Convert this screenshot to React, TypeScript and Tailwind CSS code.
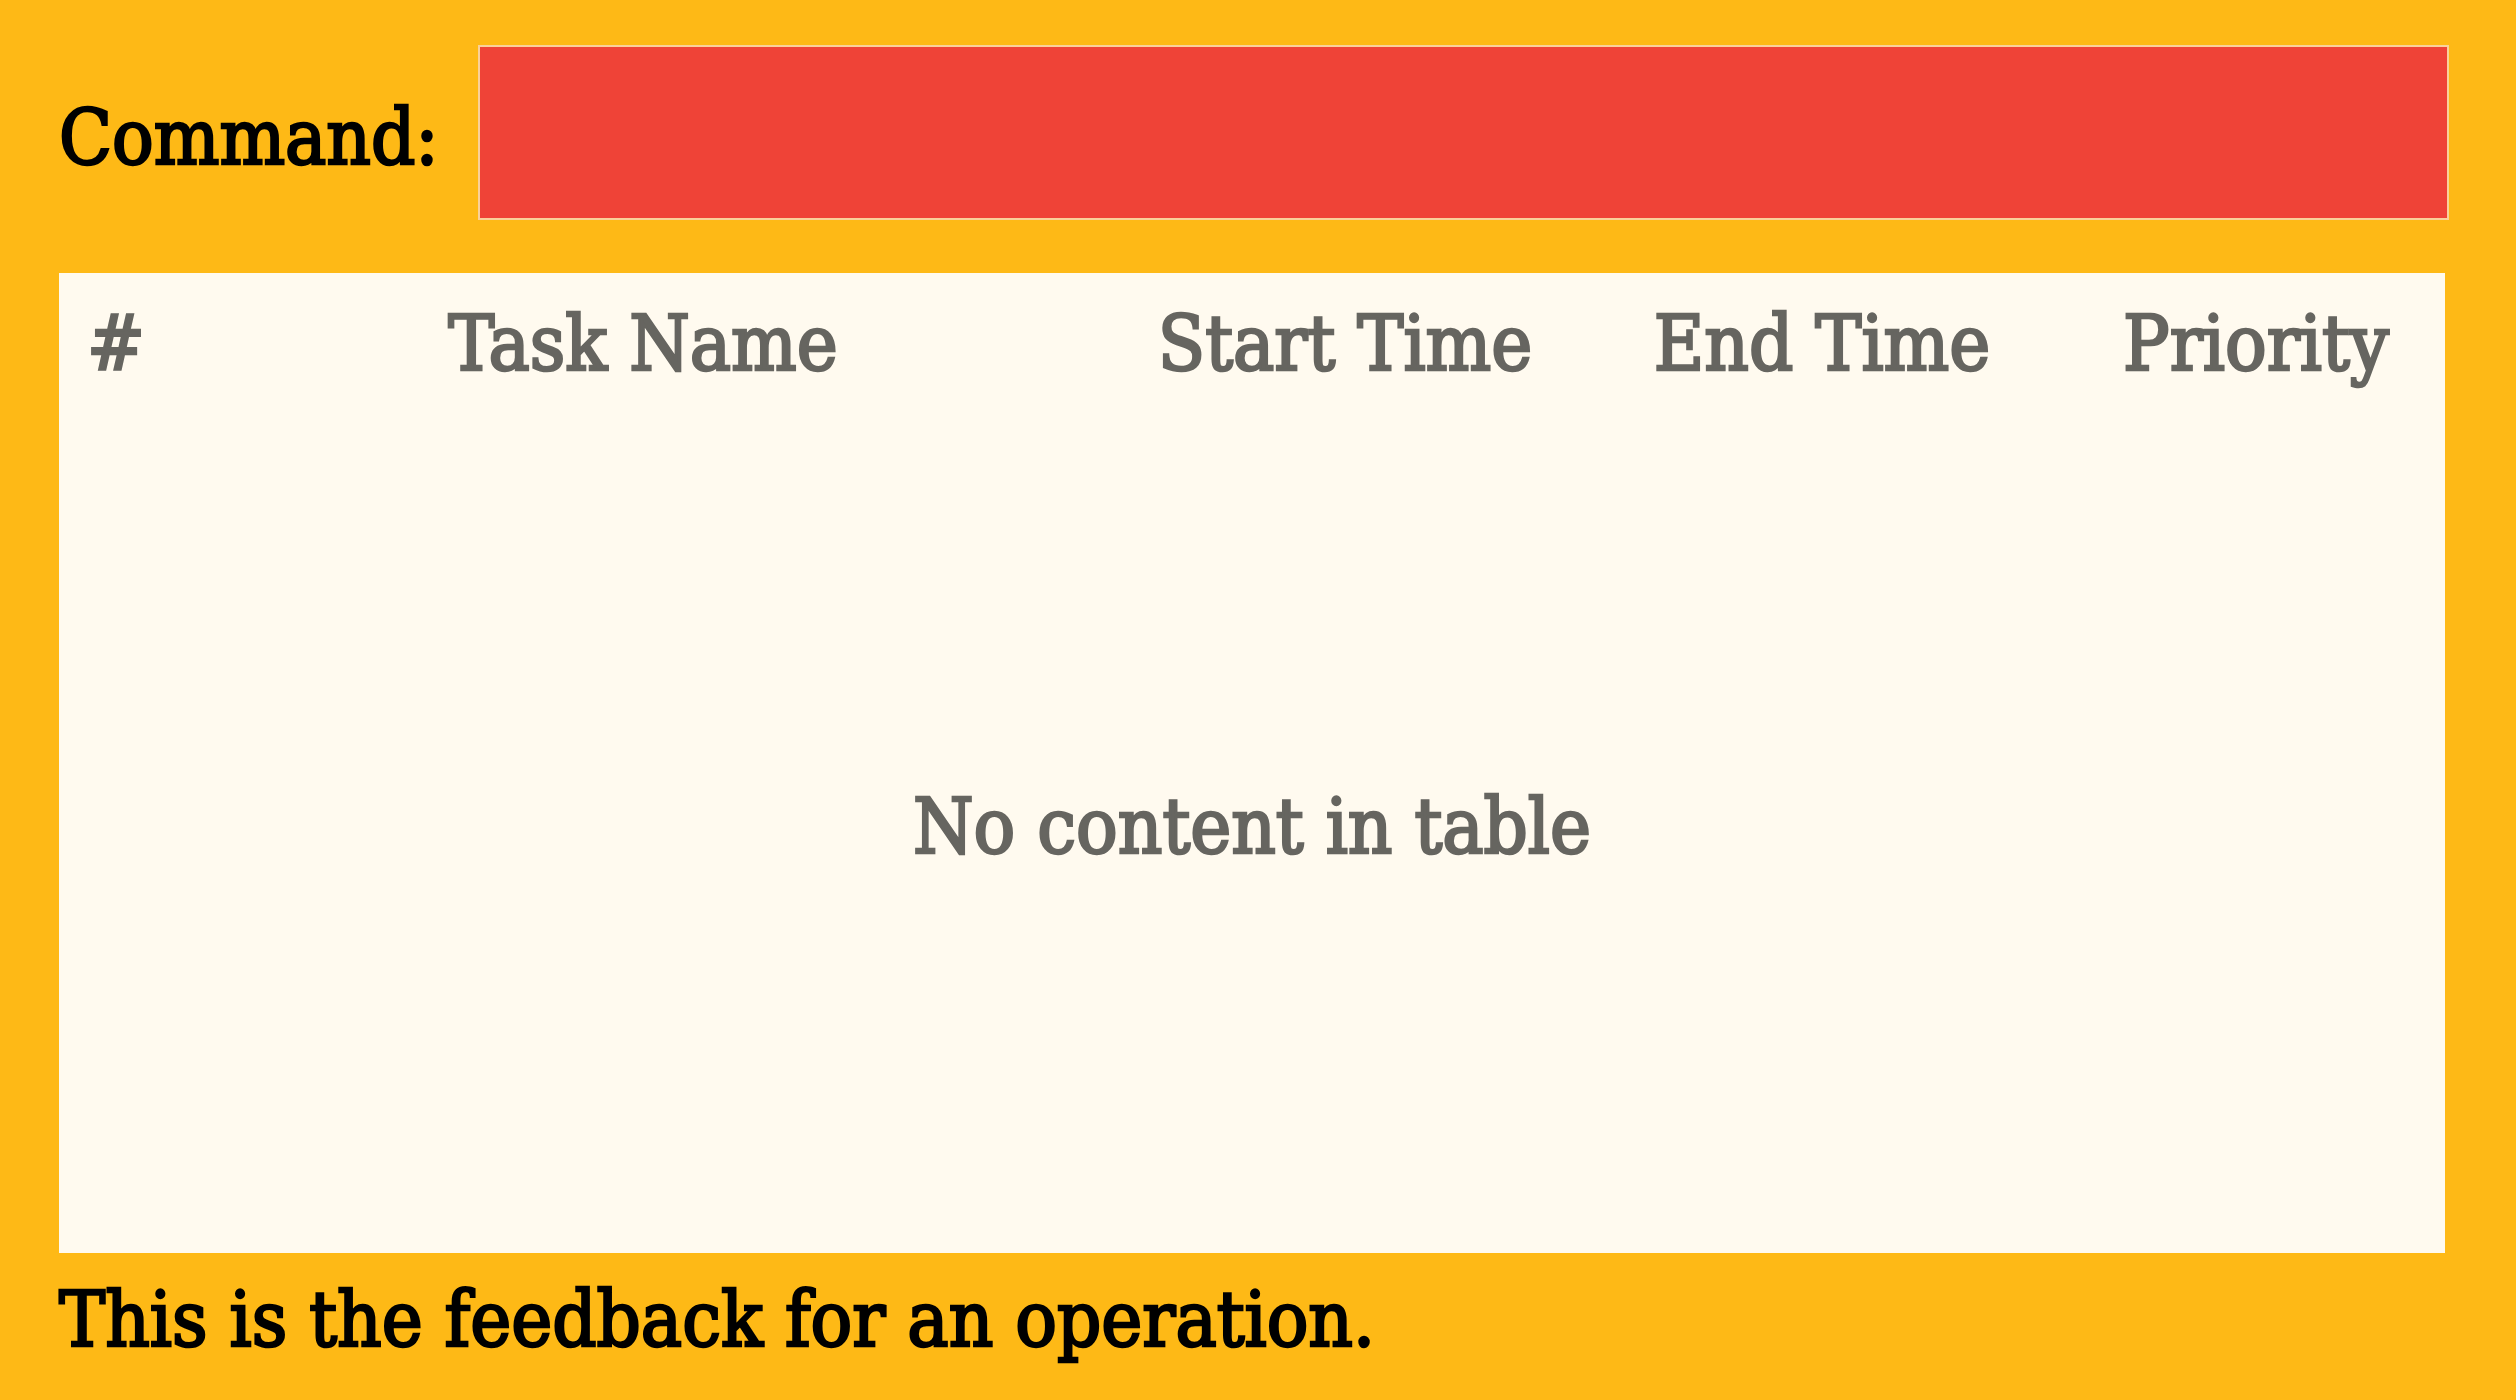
import React from "react";

const font = { fontFamily: '"DejaVu Serif Condensed", "DejaVu Serif", serif' };

export default function App() {
  return (
    <div
      className="w-[2516px] h-[1400px] bg-[#FEB916] pl-[59px] pr-[67px] pt-[45px] flex flex-col overflow-hidden [-webkit-text-stroke:2.5px_currentColor]"
      style={font}
    >
      <div className="flex items-center h-[175px]">
        <div className="w-[419px] shrink-0 text-[77px] leading-none text-black pt-[10px]">Command:</div>
        <div className="flex-1 h-full bg-[#EF4337] border-2 border-[#FAD19A]" />
      </div>
      <div className="mt-[53px] mr-[4px] h-[980px] bg-[#FFFAEF] flex flex-col text-[#666560]">
        <div className="flex h-[150px] items-center text-[77px] leading-none pb-[10px]">
          <div className="w-[82px] shrink-0 pl-[28px]">#</div>
          <div className="w-[1004px] shrink-0 text-center">Task Name</div>
          <div className="w-[400px] shrink-0 text-center">Start Time</div>
          <div className="w-[554px] shrink-0 text-center">End Time</div>
          <div className="w-[314px] shrink-0 text-center">Priority</div>
        </div>
        <div className="flex-1 flex items-center justify-center text-[77px] leading-none pb-[24px]">
          No content in table
        </div>
      </div>
      <div className="mt-[28px] text-[77px] leading-none text-black">This is the feedback for an operation.</div>
    </div>
  );
}
